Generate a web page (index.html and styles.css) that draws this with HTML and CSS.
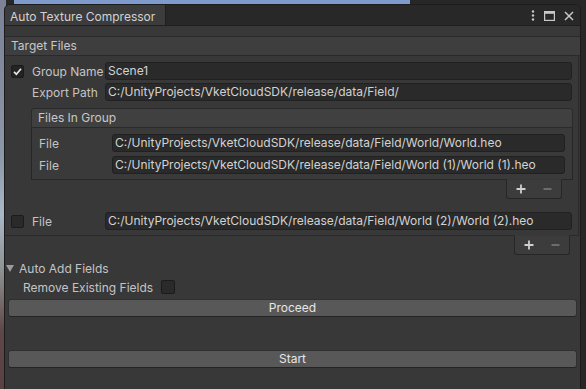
FILE: index.html
```html
<!DOCTYPE html>
<html lang="en">
<head>
<title>Auto Texture Compressor</title>
<link rel="stylesheet" href="styles.css">
</head>
<body>
<div class="window">
    <div class="tab-bar">
        <div class="tab">Auto Texture Compressor</div>
        <div class="win-icons">
            <svg width="4" height="11" viewBox="0 0 4 11"><circle cx="2" cy="1.5" r="1.2" fill="#c8c8c8"/><circle cx="2" cy="5.5" r="1.2" fill="#c8c8c8"/><circle cx="2" cy="9.5" r="1.2" fill="#c8c8c8"/></svg>
            <svg width="11" height="10" viewBox="0 0 11 10"><rect x="0.6" y="0.6" width="9.8" height="8.8" fill="none" stroke="#c8c8c8" stroke-width="1.2"/><rect x="0.6" y="0.6" width="9.8" height="2.2" fill="#c8c8c8"/></svg>
            <svg width="10" height="10" viewBox="0 0 10 10"><path d="M1 1 L9 9 M9 1 L1 9" stroke="#c8c8c8" stroke-width="1.5"/></svg>
        </div>
    </div>
    <div class="content">
        <div class="section-header">Target Files</div>
        <div class="target-box">
            <div class="row">
                <span class="check on"><svg width="11" height="11" viewBox="0 0 11 11"><path d="M2 5.8 L4.4 8.2 L9 2.8" fill="none" stroke="#e6e6e6" stroke-width="1.7"/></svg></span>
                <span class="label">Group Name</span>
                <div class="field">Scene1</div>
            </div>
            <div class="row">
                <span></span>
                <span class="label">Export Path</span>
                <div class="field">C:/UnityProjects/VketCloudSDK/release/data/Field/</div>
            </div>

            <div class="group">
                <div class="group-header">Files In Group</div>
                <div class="group-box">
                    <div class="group-row">
                        <span class="label">File</span>
                        <div class="field">C:/UnityProjects/VketCloudSDK/release/data/Field/World/World.heo</div>
                    </div>
                    <div class="group-row">
                        <span class="label">File</span>
                        <div class="field">C:/UnityProjects/VketCloudSDK/release/data/Field/World (1)/World (1).heo</div>
                    </div>
                </div>
                <div class="list-footer">
                    <svg width="10" height="10" viewBox="0 0 10 10"><path d="M5 0.5 V9.5 M0.5 5 H9.5" stroke="#cfcfcf" stroke-width="1.8"/></svg>
                    <svg width="9" height="10" viewBox="0 0 9 10"><path d="M0.5 5 H8.5" stroke="#7c7c7c" stroke-width="1.6"/></svg>
                </div>
            </div>

            <div class="row file-row">
                <span class="check"></span>
                <span class="label">File</span>
                <div class="field">C:/UnityProjects/VketCloudSDK/release/data/Field/World (2)/World (2).heo</div>
            </div>
        </div>
        <div class="list-footer outer">
            <svg width="10" height="10" viewBox="0 0 10 10"><path d="M5 0.5 V9.5 M0.5 5 H9.5" stroke="#cfcfcf" stroke-width="1.8"/></svg>
            <svg width="9" height="10" viewBox="0 0 9 10"><path d="M0.5 5 H8.5" stroke="#7c7c7c" stroke-width="1.6"/></svg>
        </div>

        <div class="foldout">
            <svg width="8" height="7" viewBox="0 0 8 7"><path d="M0 0 H8 L4 7 Z" fill="#9b9b9b"/></svg>
            <span>Auto Add Fields</span>
        </div>
        <div class="option-row">
            <span class="label">Remove Existing Fields</span>
            <span class="check"></span>
        </div>
        <button class="btn proceed">Proceed</button>
        <button class="btn start">Start</button>
    </div>
</div>
</body>
</html>
```

FILE: styles.css
```css
html, body {
    margin: 0;
    height: 100%;
    overflow: hidden;
}

body {
    background:
        linear-gradient(#7f9bcb, #7f9bcb) no-repeat 14px 0 / 396px 5px,
        linear-gradient(to bottom, #7a8294 0%, #8c97a8 40%, #a9b8c6 55%, #8d9090 70%, #5e4747 85%, #574242 100%) no-repeat 0 0 / 6px 100%,
        #272727;
    font-family: Inter, "Noto Sans", sans-serif;
    font-size: 12px;
    color: #c4c4c4;
}

.window {
    margin: 4px 0 0 4px;
    width: 577px;
    height: 400px;
    box-sizing: border-box;
    border: 1px solid #1c1c1c;
    border-radius: 6px 6px 0 0;
    background-color: #383838;
    overflow: hidden;
}

.tab-bar {
    display: flex;
    align-items: stretch;
    height: 21px;
    background-color: #282828;
    border-bottom: 1px solid #1f1f1f;
    box-sizing: border-box;
}

.tab {
    width: 161px;
    padding: 3px 0 0 5px;
    box-sizing: border-box;
    background-color: #3c3c3c;
    border-right: 1px solid #1f1f1f;
    color: #d2d2d2;
    line-height: 18px;
}

.win-icons {
    margin-left: auto;
    display: flex;
    align-items: center;
    gap: 9px;
    padding: 1px 6px 0 0;
}

.content {
    padding-top: 10px;
}

.section-header {
    height: 20px;
    box-sizing: border-box;
    border-top: 1px solid #2a2a2a;
    border-bottom: 1px solid #2a2a2a;
    background-color: #3e3e3e;
    padding-left: 6px;
    line-height: 18px;
    color: #c8c8c8;
}

.target-box {
    margin-right: 1px;
    border-right: 1px solid #2a2a2a;
    border-bottom: 1px solid #2a2a2a;
    padding: 6px 0 5px;
    display: flex;
    flex-direction: column;
}

.row {
    display: grid;
    grid-template-columns: 13px 65px 1fr;
    column-gap: 8px;
    align-items: center;
    padding: 0 6px;
    height: 18px;
    margin-bottom: 3px;
}

.file-row {
    margin: 13px 0 0;
}

.label {
    white-space: nowrap;
    color: #c4c4c4;
}

.field {
    height: 18px;
    box-sizing: border-box;
    background-color: #2a2a2a;
    border: 1px solid #212121;
    border-radius: 3px;
    padding-left: 2px;
    line-height: 16px;
    color: #d2d2d2;
    white-space: nowrap;
    overflow: hidden;
}

.check {
    width: 13px;
    height: 13px;
    box-sizing: border-box;
    background-color: #2a2a2a;
    border: 1px solid #1b1b1b;
    border-radius: 2px;
    display: flex;
    align-items: center;
    justify-content: center;
}

.check.on {
    background-color: #232323;
}

.group {
    margin: 4px 5px 0 26px;
    display: flex;
    flex-direction: column;
}

.group-header {
    height: 20px;
    box-sizing: border-box;
    border: 1px solid #2a2a2a;
    border-radius: 3px 3px 0 0;
    background-color: #404040;
    padding-left: 6px;
    line-height: 18px;
    color: #c8c8c8;
}

.group-box {
    border: 1px solid #262626;
    border-top: none;
    background-color: #3a3a3a;
    padding: 6px 7px 5px 7px;
    display: flex;
    flex-direction: column;
    gap: 4px;
}

.group-row {
    display: grid;
    grid-template-columns: 66px 1fr;
    column-gap: 7px;
    align-items: center;
    height: 18px;
}

.list-footer {
    align-self: flex-end;
    margin: -1px 11px 0 0;
    width: 56px;
    height: 20px;
    box-sizing: border-box;
    border: 1px solid #262626;
    border-top-color: #383838;
    border-radius: 0 0 3px 3px;
    background-color: #3c3c3c;
    display: flex;
    align-items: center;
    padding-left: 9px;
    gap: 17px;
}

.list-footer.outer {
    margin: -1px 10px 0 auto;
}

.foldout {
    display: flex;
    align-items: center;
    gap: 5px;
    height: 18px;
    margin-top: 4px;
    padding-left: 1px;
}

.option-row {
    display: flex;
    align-items: center;
    gap: 8px;
    height: 20px;
    padding-left: 18px;
}

.option-row .check {
    width: 14px;
    height: 14px;
}

.btn {
    display: block;
    margin: 2px 3px 0 3px;
    width: 569px;
    height: 18px;
    box-sizing: border-box;
    background-color: #585858;
    border: 1px solid #303030;
    border-bottom-color: #242424;
    border-radius: 3px;
    font-family: Inter, "Noto Sans", sans-serif;
    font-size: 12px;
    color: #e6e6e6;
    padding: 0;
    line-height: 16px;
}

.btn.start {
    margin-top: 33px;
}
```
